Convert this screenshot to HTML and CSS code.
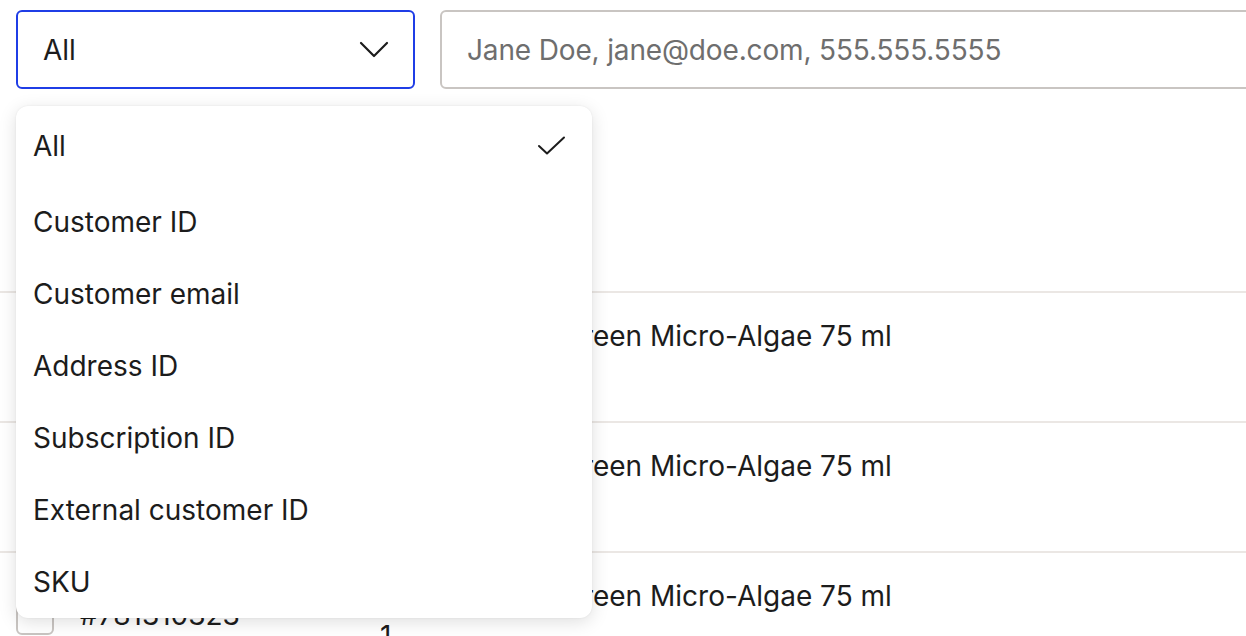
FILE: index.html
```html
<!DOCTYPE html>
<html lang="en">

<head>
    <meta charset="UTF-8">
    <meta name="viewport" content="width=device-width, initial-scale=1.0">
    <title>Subscriptions</title>
    <link rel="stylesheet" href="styles.css">
</head>

<body>

    <div class="toolbar">
        <div class="filter">
            <button class="select" type="button">
                <span>All</span>
                <svg class="chevron" width="32" height="32" viewBox="0 0 32 32">
                    <polyline points="3,9 16,22 29,9" />
                </svg>
            </button>
            <!-- open menu of the search field picker -->
            <ul class="menu">
                <li class="option selected">
                    <span>All</span>
                    <svg class="check" width="32" height="32" viewBox="0 0 32 32">
                        <polyline points="3,16 11,23.5 28,7.5" />
                    </svg>
                </li>
                <li class="option">Customer ID</li>
                <li class="option">Customer email</li>
                <li class="option">Address ID</li>
                <li class="option">Subscription ID</li>
                <li class="option">External customer ID</li>
                <li class="option">SKU</li>
            </ul>
        </div>
        <input class="search" type="text" placeholder="Jane Doe, jane@doe.com, 555.555.5555">
    </div>

    <div class="rows">
        <div class="row">
            <div class="cell-check"><span class="checkbox"></span></div>
            <div class="cell-id">#781310321</div>
            <div class="cell-qty">1</div>
            <div class="cell-title">Green Micro-Algae 75 ml</div>
        </div>
        <div class="row">
            <div class="cell-check"><span class="checkbox"></span></div>
            <div class="cell-id">#781310322</div>
            <div class="cell-qty">1</div>
            <div class="cell-title">Green Micro-Algae 75 ml</div>
        </div>
        <div class="row">
            <div class="cell-check"><span class="checkbox"></span></div>
            <div class="cell-id">#781310323</div>
            <div class="cell-qty">1</div>
            <div class="cell-title">Green Micro-Algae 75 ml</div>
        </div>
    </div>

</body>

</html>
```

FILE: styles.css
```css
html,
body {
    margin: 0;
    padding: 0;
    background: #fff;
    overflow: hidden;
}

body {
    font-family: Inter, "Noto Sans", sans-serif;
    font-size: 28px;
    line-height: 32px;
    color: #1c1c1c;
}

.toolbar {
    display: flex;
    gap: 25px;
    padding: 10px 0 0 16px;
}

.filter {
    position: relative;
}

.select {
    display: flex;
    align-items: center;
    justify-content: space-between;
    box-sizing: border-box;
    width: 399px;
    height: 79px;
    padding: 0 23px 0 25px;
    border: 2px solid #1f3de6;
    border-radius: 6px;
    background: #fff;
    font: inherit;
    color: inherit;
}

.chevron,
.check {
    fill: none;
    stroke: #1c1c1c;
    stroke-width: 2.2;
    stroke-linecap: round;
    stroke-linejoin: round;
}

.check {
    stroke-width: 2;
}

.search {
    box-sizing: border-box;
    width: 900px;
    flex-shrink: 0;
    height: 79px;
    padding: 0 25px;
    border: 2px solid #c9c5c2;
    border-radius: 6px;
    font: inherit;
    letter-spacing: -.15px;
    color: inherit;
    outline: none;
}

.search::placeholder {
    color: #6e6e6e;
}

.menu {
    position: absolute;
    top: 96px;
    left: 0;
    z-index: 2;
    box-sizing: border-box;
    width: 576px;
    margin: 0;
    padding: 4px 0 0;
    list-style: none;
    background: #fff;
    border-radius: 12px;
    box-shadow: 0 4px 18px rgba(0, 0, 0, .13), 0 0 2px rgba(0, 0, 0, .08);
}

.option {
    display: flex;
    align-items: center;
    justify-content: space-between;
    height: 72px;
    padding: 0 24px 0 17px;
}

.selected {
    height: 76px;
    padding-bottom: 4px;
    box-sizing: border-box;
}

.rows {
    margin-top: 202px;
}

.row {
    display: flex;
    align-items: flex-start;
    height: 128px;
    border-top: 2px solid #ebe7e4;
}

.cell-check {
    padding: 44px 0 0 16px;
}

.checkbox {
    display: block;
    box-sizing: border-box;
    width: 38px;
    height: 38px;
    border: 2px solid #c9c5c2;
    border-radius: 6px;
}

.cell-id {
    width: 290px;
    margin: 46px 0 0 26px;
}

.cell-qty {
    width: 182px;
    padding: 67px 0 0 10px;
}

.cell-title {
    margin-top: 27px;
}
```
